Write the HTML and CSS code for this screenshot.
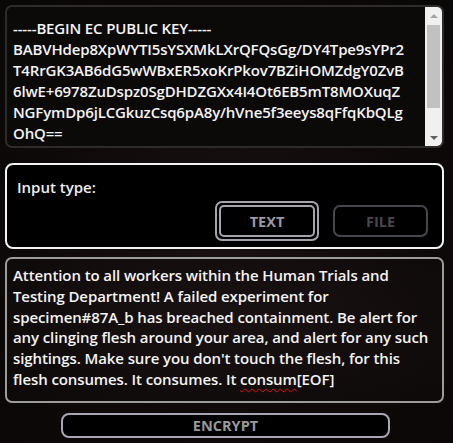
FILE: index.html
```html
<!DOCTYPE html>
<html>
<head>
<meta charset="utf-8">
<link rel="stylesheet" href="styles.css">
</head>
<body>
<div class="page">
  <div class="keybox">
    <div class="keytext">-----BEGIN EC PUBLIC KEY-----<br>BABVHdep8XpWYTI5sYSXMkLXrQFQsGg/DY4Tpe9sYPr2<br>T4RrGK3AB6dG5wWBxER5xoKrPkov7BZiHOMZdgY0ZvB<br>6lwE+6978ZuDspz0SgDHDZGXx4I4Ot6EB5mT8MOXuqZ<br>NGFymDp6jLCGkuzCsq6pA8y/hVne5f3eeys8qFfqKbQLg<br>OhQ==<br>-----END EC PUBLIC KEY-----</div>
    <div class="scrollbar">
      <div class="arrow up"></div>
      <div class="thumb-track"><div class="thumb"></div></div>
      <div class="arrow down"></div>
    </div>
  </div>

  <div class="inputbox">
    <div class="label">Input type:</div>
    <div class="buttons">
      <div class="btn-text"><div class="btn-inner">TEXT</div></div>
      <div class="btn-file">FILE</div>
    </div>
  </div>

  <div class="msgbox">Attention to all workers within the Human Trials and<br>Testing Department! A failed experiment for<br>specimen#87A_b has breached containment. Be alert for<br>any clinging flesh around your area, and alert for any such<br>sightings. Make sure you don't touch the flesh, for this<br>flesh consumes. It consumes. It <span class="typo">consum</span>[EOF]</div>

  <div class="encrypt-row">
    <div class="encrypt">ENCRYPT</div>
  </div>
</div>
</body>
</html>
```

FILE: styles.css
```css
html, body {
  margin: 0;
  padding: 0;
  width: 453px;
  height: 443px;
  overflow: hidden;
}
body {
  background: radial-gradient(ellipse at 50% 55%, #1a1111 0%, #0e0909 60%, #0a0707 100%);
  font-family: "Open Sans", "Noto Sans", sans-serif;
  font-weight: 600;
  color: #f4f4f4;
}
.page {
  padding: 5px 9px 0 5px;
  display: flex;
  flex-direction: column;
}
.keybox {
  height: 139px;
  border: 2px solid #2e2b2b;
  border-radius: 7px;
  background: #0c0909;
  display: flex;
  overflow: hidden;
}
.keytext {
  flex: 1;
  padding: 11px 0 0 6px;
  font-size: 15px;
  line-height: 21px;
  white-space: nowrap;
  overflow: hidden;
  letter-spacing: -0.15px;
}
.scrollbar {
  width: 17px;
  background: #f0f0f0;
  display: flex;
  flex-direction: column;
}
.arrow {
  height: 17px;
  display: flex;
  align-items: center;
  justify-content: center;
}
.arrow.up::before {
  content: "";
  border-left: 4px solid transparent;
  border-right: 4px solid transparent;
  border-bottom: 4px solid #a3a3a3;
}
.arrow.down::before {
  content: "";
  border-left: 4px solid transparent;
  border-right: 4px solid transparent;
  border-top: 4px solid #606060;
}
.thumb-track {
  flex: 1;
  padding: 0 2px;
}
.thumb {
  height: 83px;
  background: #c1c1c1;
  margin-top: 1px;
}
.inputbox {
  margin-top: 15px;
  height: 82px;
  border: 2px solid #f4f4f4;
  border-radius: 8px;
  background: #000;
  display: flex;
  flex-direction: column;
}
.label {
  padding: 12px 0 0 10px;
  font-size: 15px;
  line-height: 20px;
  color: #eeeeee;
}
.buttons {
  display: flex;
  justify-content: flex-end;
  align-items: center;
  gap: 14px;
  padding: 4px 14px 0 0;
}
.btn-text {
  border: 2px solid #a7a3ad;
  border-radius: 7px;
  padding: 2px;
  box-sizing: border-box;
  width: 104px;
  height: 40px;
}
.btn-inner {
  height: 100%;
  border: 2px solid #a7a3ad;
  border-radius: 5px;
  box-sizing: border-box;
  display: flex;
  align-items: center;
  justify-content: center;
  font-size: 14.5px;
  font-weight: 700;
  color: #9c98a2;
}
.btn-file {
  width: 95px;
  height: 32px;
  box-sizing: border-box;
  border: 2px solid #48454d;
  border-radius: 7px;
  display: flex;
  align-items: center;
  justify-content: center;
  font-size: 14.5px;
  font-weight: 700;
  color: #4a474f;
}
.msgbox {
  margin-top: 8px;
  height: 136px;
  border: 2px solid #9c9c9c;
  border-radius: 7px;
  background: radial-gradient(ellipse at 50% 40%, #1a1212 0%, #0d0909 100%);
  padding: 6px 0 0 6px;
  font-size: 15px;
  line-height: 20.8px;
  white-space: nowrap;
  overflow: hidden;
  letter-spacing: -0.1px;
}
.typo {
  text-decoration: underline wavy #e01010;
  text-decoration-thickness: 1px;
  text-underline-offset: 3px;
}
.encrypt-row {
  margin-top: 10px;
  display: flex;
  padding-left: 56px;
}
.encrypt {
  width: 329px;
  height: 25px;
  box-sizing: border-box;
  border: 2px solid #aaa5b4;
  border-radius: 8px;
  background: #000;
  display: flex;
  align-items: center;
  justify-content: center;
  font-size: 14.5px;
  font-weight: 700;
  color: #999999;
}
```
